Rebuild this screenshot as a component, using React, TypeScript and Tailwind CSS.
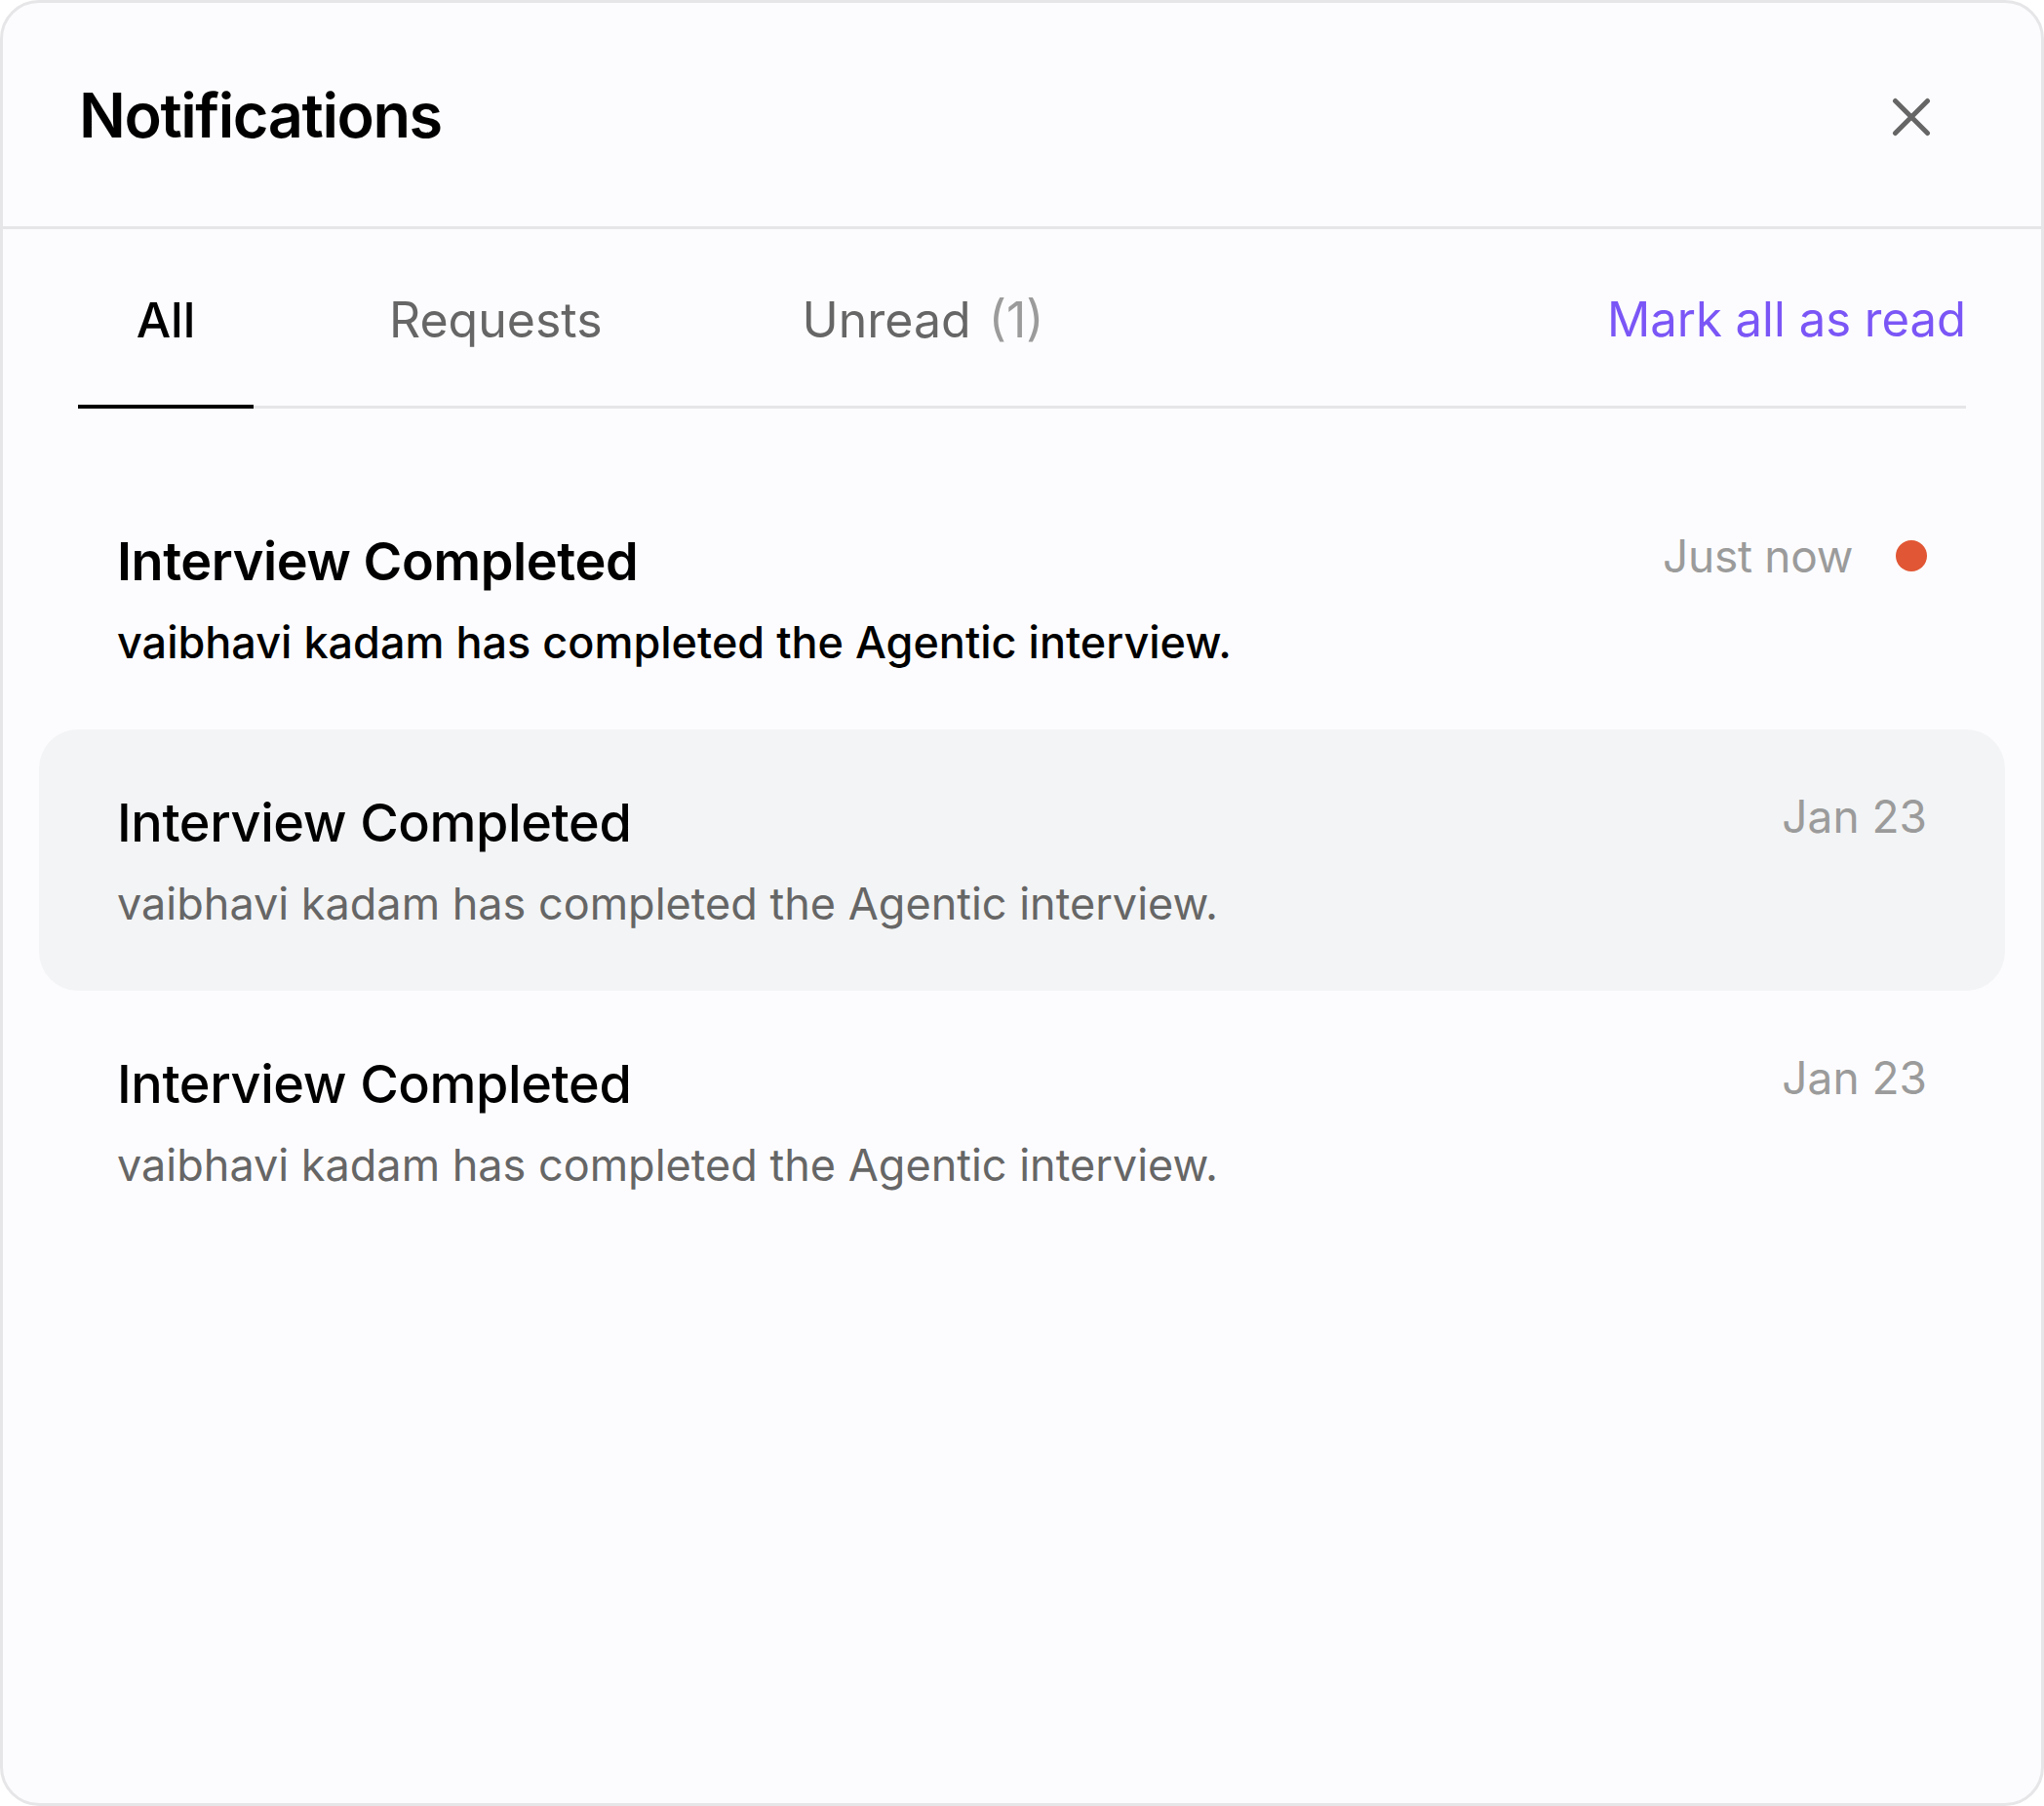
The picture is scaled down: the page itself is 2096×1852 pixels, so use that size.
import React from "react";

type Item = {
  title: string;
  desc: string;
  time: string;
  unread?: boolean;
  highlighted?: boolean;
};

const items: Item[] = [
  {
    title: "Interview Completed",
    desc: "vaibhavi kadam has completed the Agentic interview.",
    time: "Just now",
    unread: true,
  },
  {
    title: "Interview Completed",
    desc: "vaibhavi kadam has completed the Agentic interview.",
    time: "Jan 23",
    highlighted: true,
  },
  {
    title: "Interview Completed",
    desc: "vaibhavi kadam has completed the Agentic interview.",
    time: "Jan 23",
  },
];

function NotificationRow({ item }: { item: Item }) {
  return (
    <div
      className={
        "h-[268px] rounded-[40px] px-[80px] flex justify-between items-start " +
        (item.highlighted ? "bg-[#f3f4f5]" : "")
      }
    >
      <div className="pt-[64px] flex flex-col">
        <div
          className={
            "text-[54px] leading-[64px] text-black tracking-[-0.4px] " +
            (item.unread ? "font-semibold" : "font-medium")
          }
        >
          {item.title}
        </div>
        <div
          className={
            "mt-[23px] text-[45px] leading-[56px] " +
            (item.unread ? "font-medium text-black" : "font-normal text-[#666666]")
          }
        >
          {item.desc}
        </div>
      </div>
      {item.unread ? (
        <div className="mt-[62px] flex items-center gap-[44px]">
          <span className="text-[46px] leading-[56px] text-[#9b9b9b] tracking-[-0.3px]">{item.time}</span>
          <span className="w-[32px] h-[32px] rounded-full bg-[#e15634]" />
        </div>
      ) : (
        <div className="mt-[61px] text-[46px] leading-[56px] text-[#9b9b9b]">{item.time}</div>
      )}
    </div>
  );
}

export default function App() {
  return (
    <div className="w-[2096px] h-[1852px] bg-white font-['Inter',sans-serif]">
      <div className="w-full h-full rounded-[40px] border-[3px] border-[#e6e6e8] bg-[#fcfcfe] flex flex-col overflow-hidden">
        {/* Header */}
        <div className="h-[229px] flex items-center justify-between pl-[78px] pr-[113px]">
          <h1 className="text-[63px] leading-[76px] font-semibold text-black tracking-[-1.4px]">
            Notifications
          </h1>
          <button className="mt-[5px] w-[40px] h-[40px] flex items-center justify-center">
            <svg width="40" height="40" viewBox="0 0 40 40" fill="none">
              <path
                d="M3.5 3.5 L36.5 36.5 M36.5 3.5 L3.5 36.5"
                stroke="#666666"
                strokeWidth="5"
                strokeLinecap="round"
              />
            </svg>
          </button>
        </div>
        <div className="h-[3px] bg-[#e6e6e8]" />

        {/* Tabs */}
        <div className="mx-[77px] pt-[63px] flex items-end justify-between border-b-[3px] border-[#e6e6e8]">
          <div className="flex items-end">
            <div className="relative w-[180px] pb-[58px] flex justify-center">
              <span className="text-[50px] leading-[60px] font-medium text-black">All</span>
              <span className="absolute left-0 right-0 bottom-[-3px] h-[4px] bg-black" />
            </div>
            <div className="ml-[139px] pb-[58px]">
              <span className="text-[50px] leading-[60px] text-[#666666]">Requests</span>
            </div>
            <div className="ml-[205px] pb-[58px] flex items-baseline">
              <span className="text-[50px] leading-[60px] text-[#666666]">Unread</span>
              <span className="ml-[18px] text-[50px] leading-[60px] text-[#9b9b9b]">(1)</span>
            </div>
          </div>
          <button className="pb-[58px] text-[49px] leading-[60px] text-[#7b56f6]">
            Mark all as read
          </button>
        </div>

        {/* List */}
        <div className="px-[37px] pt-[61px] flex flex-col">
          {items.map((it, i) => (
            <NotificationRow key={i} item={it} />
          ))}
        </div>
      </div>
    </div>
  );
}
